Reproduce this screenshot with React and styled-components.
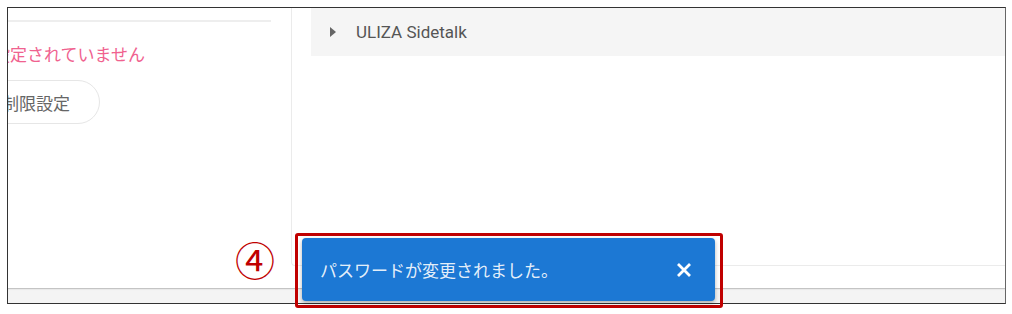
import React from "react";
import styled, { createGlobalStyle } from "styled-components";

const Global = createGlobalStyle`
  html, body { margin: 0; padding: 0; background: #fff; }
  body { font-family: Roboto, "Noto Sans CJK JP", sans-serif; }
  * { box-sizing: border-box; }
`;

const Stage = styled.div`
  position: relative;
  width: 1012px;
  height: 314px;
  overflow: hidden;
  padding: 7px 0 0 7px;
`;

const Frame = styled.div`
  width: 999px;
  height: 297px;
  border: 1px solid #333;
  border-right-color: #666;
  display: flex;
  flex-direction: column;
  overflow: hidden;
  background: #fff;
`;

const Main = styled.div`
  display: flex;
  height: 280px;
`;

const LeftPane = styled.div`
  width: 283px;
  flex: none;
  overflow: hidden;
  display: flex;
  flex-direction: column;
  align-items: flex-start;
`;

const Rule = styled.div`
  align-self: stretch;
  height: 2px;
  margin: 12px 20px 0 0;
  background: #eeeeee;
`;

const Warning = styled.div`
  margin: 21px 0 0 -15px;
  font-family: "Noto Sans CJK JP", sans-serif;
  font-size: 17px;
  line-height: 22px;
  color: #f0628f;
  white-space: nowrap;
`;

const PillButton = styled.button`
  margin: 15px 0 0 -31px;
  height: 44px;
  padding: 0 29px 0 24px;
  border: 1px solid #e6e6e6;
  border-radius: 22px;
  background: #fff;
  font-family: "Noto Sans CJK JP", sans-serif;
  font-size: 17px;
  color: #666;
  white-space: nowrap;
`;

const RightCard = styled.div`
  flex: 1;
  height: 258px;
  border-left: 1px solid #ebebeb;
  border-bottom: 1px solid #ebebeb;
  border-bottom-left-radius: 4px;
  padding-left: 19px;
`;

const AccordionHeader = styled.div`
  height: 48px;
  margin-right: -20px;
  background: #f5f5f5;
  display: flex;
  align-items: center;
  padding-left: 19px;
  gap: 20px;
  font-family: Roboto, sans-serif;
  font-size: 17px;
  color: #555;
`;

const Caret = styled.span`
  width: 0;
  height: 0;
  border-top: 5px solid transparent;
  border-bottom: 5px solid transparent;
  border-left: 6px solid #666;
`;

const Footer = styled.div`
  flex: 1;
  border-top: 1px solid #c4c4c4;
  box-shadow: inset 0 1px 1px rgba(0, 0, 0, 0.05);
  background: #f4f4f4;
`;

const StepMark = styled.div`
  position: absolute;
  left: 235px;
  top: 236px;
  font-family: "Noto Sans CJK JP", sans-serif;
  font-weight: 400;
  font-size: 40px;
  line-height: 46px;
  color: #c00000;
`;

const Highlight = styled.div`
  position: absolute;
  left: 295px;
  top: 233px;
  width: 428px;
  height: 75px;
  border: 3px solid #c00000;
  border-radius: 3px;
  padding: 2px 5px 4px 4px;
  display: flex;
`;

const Toast = styled.div`
  flex: 1;
  background: #1c78d4;
  border-radius: 4px;
  box-shadow: 0 2px 4px rgba(0, 0, 0, 0.3);
  display: flex;
  align-items: center;
  justify-content: space-between;
  padding: 0 21px 0 18px;
`;

const ToastText = styled.span`
  font-family: "Noto Sans CJK JP", sans-serif;
  font-size: 17px;
  color: rgba(255, 255, 255, 0.9);
`;

const CloseButton = styled.button`
  border: 0;
  background: transparent;
  padding: 0;
  width: 20px;
  height: 20px;
  display: flex;
  align-items: center;
  justify-content: center;
`;

export default function App() {
  return (
    <>
      <Global />
      <Stage>
        <Frame>
          <Main>
            <LeftPane>
              <Rule />
              <Warning>設定されていません</Warning>
              <PillButton>制限設定</PillButton>
            </LeftPane>
            <RightCard>
              <AccordionHeader>
                <Caret />
                <span>ULIZA Sidetalk</span>
              </AccordionHeader>
            </RightCard>
          </Main>
          <Footer />
        </Frame>
        <StepMark>④</StepMark>
        <Highlight>
          <Toast>
            <ToastText>パスワードが変更されました。</ToastText>
            <CloseButton aria-label="close">
              <svg width="16" height="16" viewBox="0 0 16 16">
                <path d="M2 2 L14 14 M14 2 L2 14" stroke="#fff" strokeWidth="2.8" strokeLinecap="butt" />
              </svg>
            </CloseButton>
          </Toast>
        </Highlight>
      </Stage>
    </>
  );
}
